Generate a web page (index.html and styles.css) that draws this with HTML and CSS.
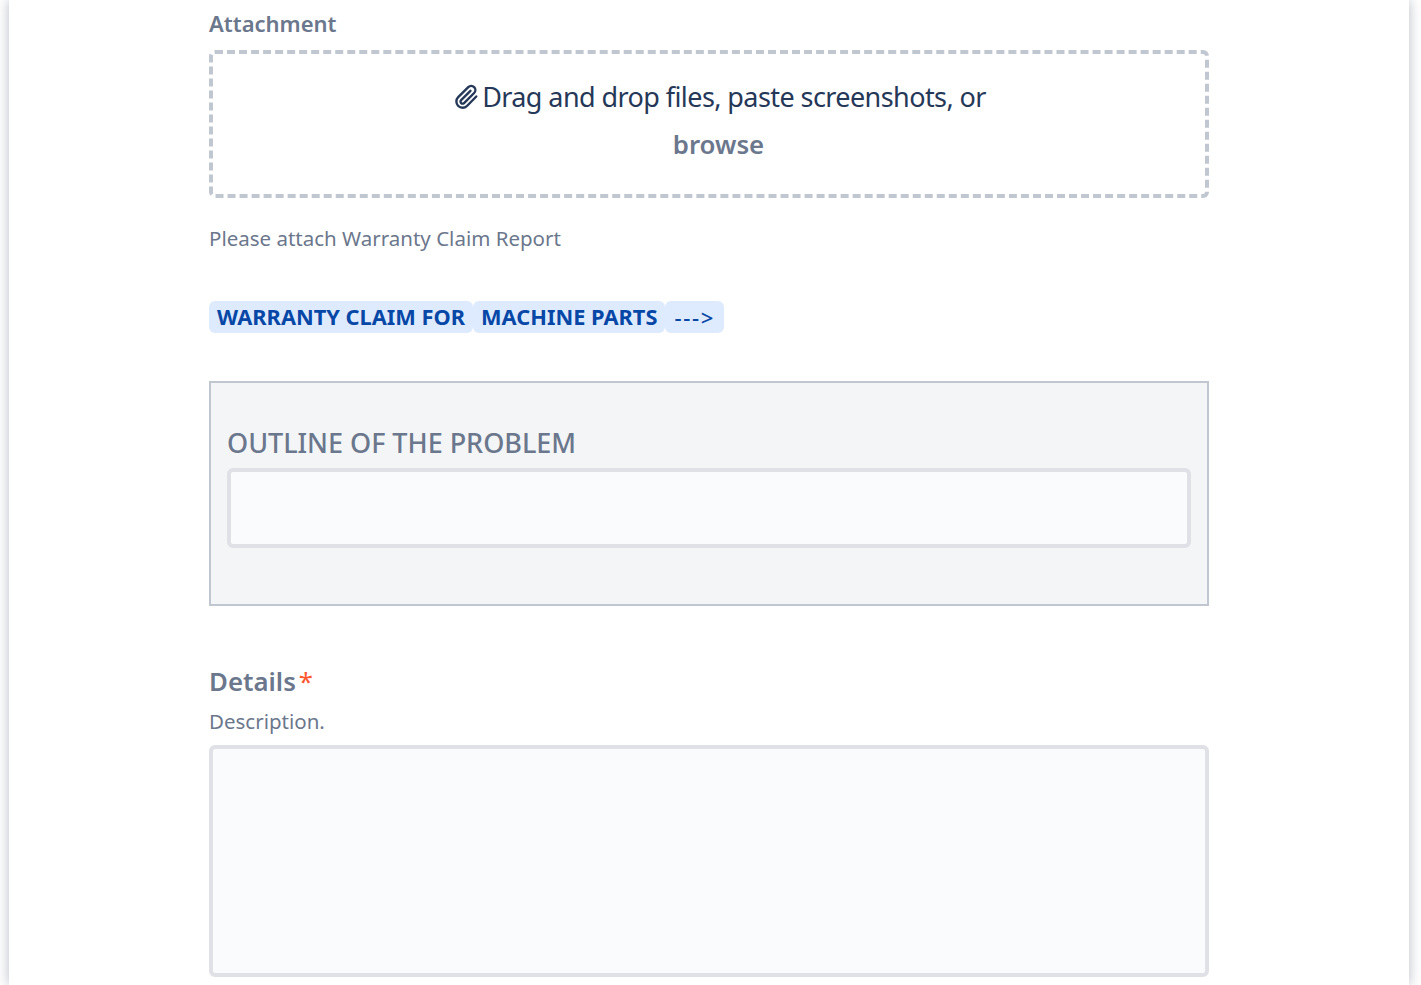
FILE: index.html
```html
<!DOCTYPE html>
<html lang="en">
<head>
<meta charset="utf-8">
<title>Warranty Claim</title>
<link rel="stylesheet" href="styles.css">
</head>
<body>
<main class="page">
  <div class="form">
    <div class="label-attach">Attachment</div>
    <div class="drop">
      <div class="drop-line">
        <svg class="clip" viewBox="0 0 24 24" width="26" height="26" fill="none" stroke="#253858" stroke-width="2.2" stroke-linecap="round" stroke-linejoin="round"><path d="M21.5 11.5l-8.6 8.8a5.7 5.7 0 0 1-8.1-8.1l9.3-9.3a3.8 3.8 0 0 1 5.4 5.4l-9.3 9.3a1.9 1.9 0 0 1-2.7-2.7l8.6-8.6"/></svg><span class="drop-text">Drag and drop files, paste screenshots, or</span>
      </div>
      <div class="browse">browse</div>
    </div>
    <div class="hint">Please attach Warranty Claim Report</div>
    <div class="tags"><span class="tag strong">WARRANTY CLAIM FOR</span><span class="tag strong">MACHINE PARTS</span><span class="tag arrow">---&gt;</span></div>
    <section class="panel">
      <div class="panel-title">OUTLINE OF THE PROBLEM</div>
      <div class="input"></div>
    </section>
    <div class="label-details">Details<span class="req">*</span></div>
    <div class="desc">Description.</div>
    <div class="textarea"></div>
  </div>
</main>
</body>
</html>
```
FILE: styles.css
```css
html, body { margin: 0; padding: 0; height: 100%; overflow: hidden; background: #fff; }
body { font-family: "Noto Sans", "Open Sans", sans-serif; color: #253858; }
.page { width: 1400px; height: 985px; margin-left: 9px; box-shadow: 0 0 12px rgba(9,30,66,.3); background: #fff; box-sizing: border-box; padding-left: 200px; overflow: hidden; }
.form { width: 1000px; padding-top: 8px; }
.label-attach { font-size: 22px; font-weight: 600; color: #6b778c; line-height: 30px; }
.drop { margin-top: 12px; height: 148px; box-sizing: border-box; border: 4px dashed #c1c7d0; border-radius: 6px; display: flex; flex-direction: column; align-items: center; padding: 19px 0 0 21px; }
.drop-line { display: flex; align-items: center; height: 48px; font-size: 27px; line-height: 48px; color: #253858; gap: 3px; }
.drop-text { letter-spacing: -0.58px; }
.clip { flex: none; }
.browse { margin: -1px 2px 0 0; font-size: 25.8px; font-weight: 600; color: #6b778c; line-height: 48px; }
.hint { margin-top: 25px; font-size: 20.5px; line-height: 30px; color: #6b778c; }
.tags { margin-top: 48px; display: flex; font-size: 21.8px; }
.tag { background: #deebff; color: #0747a6; height: 32px; line-height: 32px; padding: 0 8px; border-radius: 6px; }
.strong { font-weight: 700; }
.arrow { font-size: 22px; font-weight: 500; letter-spacing: 1.7px; padding: 0 9px; }
.panel { margin-top: 48px; height: 225px; box-sizing: border-box; background: #f4f5f7; border: 2px solid #c1c7d0; padding: 40px 16px 0; }
.panel-title { font-size: 27px; font-weight: 500; color: #6b778c; line-height: 40px; letter-spacing: -0.03px; }
.input { margin-top: 5px; height: 80px; box-sizing: border-box; background: #fafbfc; border: 4px solid #dfe1e6; border-radius: 6px; }
.label-details { margin-top: 55px; font-size: 25.8px; font-weight: 600; color: #6b778c; line-height: 40px; }
.req { color: #ff5630; margin-left: 3px; font-weight: 400; }
.desc { margin-top: 4px; font-size: 20.5px; line-height: 32px; color: #6b778c; }
.textarea { margin-top: 8px; height: 232px; box-sizing: border-box; background: #fafbfc; border: 4px solid #dfe1e6; border-radius: 6px; }
```
